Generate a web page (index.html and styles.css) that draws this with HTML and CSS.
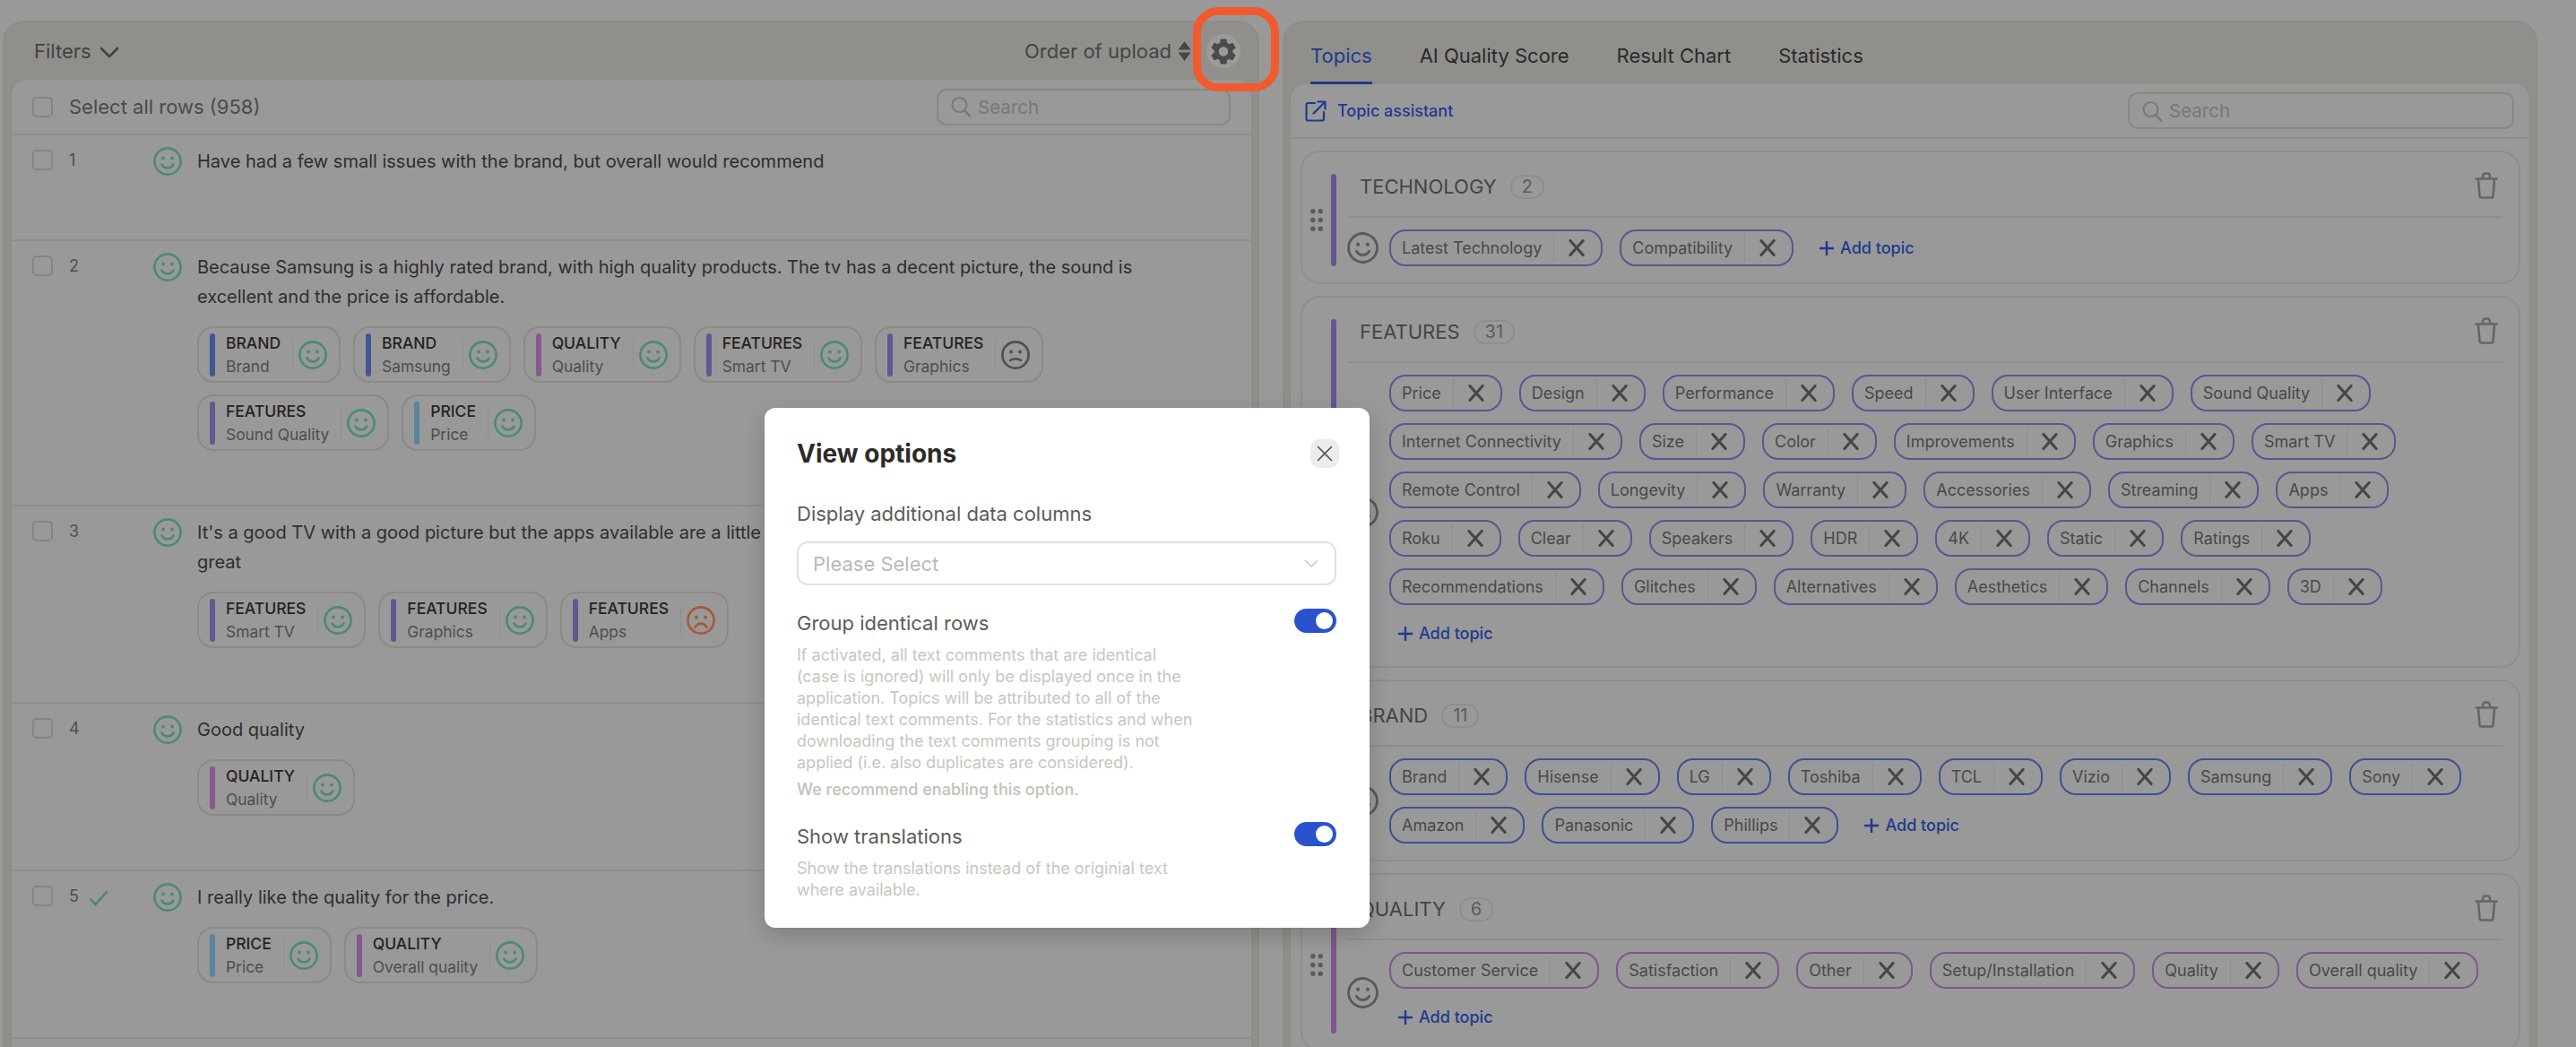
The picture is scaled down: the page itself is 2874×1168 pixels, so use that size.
FILE: index.html
```html
<!doctype html>
<html lang="en">
<head>
    <meta charset="utf-8">
    <meta name="viewport" content="width=device-width, initial-scale=1">
    <title>View options</title>
    <link rel="stylesheet" href="styles.css">
</head>
<body>

<svg class="sprite" aria-hidden="true">
    <symbol id="smile" viewBox="0 0 32 32">
        <circle cx="16" cy="16" r="14.6" fill="none" stroke="currentColor" stroke-width="2.6"/>
        <circle cx="11" cy="12.5" r="1.9" fill="currentColor"/>
        <circle cx="21" cy="12.5" r="1.9" fill="currentColor"/>
        <path d="M9.5 19.5c1.5 2.6 3.8 3.9 6.5 3.9s5-1.300 6.500-3.900" fill="none" stroke="currentColor" stroke-width="2.6" stroke-linecap="round"/>
    </symbol>
    <symbol id="neutral" viewBox="0 0 32 32">
        <circle cx="16" cy="16" r="14.6" fill="none" stroke="currentColor" stroke-width="2.6"/>
        <circle cx="11" cy="12.500" r="1.9" fill="currentColor"/>
        <circle cx="21" cy="12.500" r="1.9" fill="currentColor"/>
        <path d="M10 22c1.800-1.300 3.800-1.800 6-1.800s4.200.5 6 1.800" fill="none" stroke="currentColor" stroke-width="2.6" stroke-linecap="round"/>
    </symbol>
    <symbol id="sad" viewBox="0 0 32 32">
        <circle cx="16" cy="16" r="14.6" fill="none" stroke="currentColor" stroke-width="2.6"/>
        <circle cx="11" cy="12.500" r="1.9" fill="currentColor"/>
        <circle cx="21" cy="12.500" r="1.9" fill="currentColor"/>
        <path d="M9.500 24c1.500-3 3.800-4.400 6.500-4.400s5 1.400 6.500 4.400" fill="none" stroke="currentColor" stroke-width="2.6" stroke-linecap="round"/>
    </symbol>
    <symbol id="cross" viewBox="0 0 20 20">
        <path d="M2.500 1.500l15 17M17.500 1.500l-15 17" fill="none" stroke="currentColor" stroke-width="3.200" stroke-linecap="round"/>
    </symbol>
    <symbol id="search" viewBox="0 0 24 24">
        <circle cx="10.500" cy="10" r="8" fill="none" stroke="currentColor" stroke-width="2.200"/>
        <path d="M16 16l6 6.500" fill="none" stroke="currentColor" stroke-width="2.600" stroke-linecap="round"/>
    </symbol>
    <symbol id="trash" viewBox="0 0 26 30">
        <path d="M1.500 7.500h23M4 8l1.500 18.500q.2 2 2.200 2h10.600q2 0 2.200-2L22 8M8.500 7l1-4q.4-1.500 1.900-1.500h3.200q1.500 0 1.900 1.500l1 4" fill="none" stroke="currentColor" stroke-width="2.600" stroke-linecap="round" stroke-linejoin="round"/>
    </symbol>
    <symbol id="plus" viewBox="0 0 16 16">
        <path d="M8 0v16M0 8h16" fill="none" stroke="currentColor" stroke-width="2.400"/>
    </symbol>
    <symbol id="grip" viewBox="0 0 14 25">
        <circle cx="2.800" cy="2.800" r="2.700" fill="currentColor"/><circle cx="11.200" cy="2.800" r="2.700" fill="currentColor"/>
        <circle cx="2.800" cy="12.500" r="2.700" fill="currentColor"/><circle cx="11.200" cy="12.500" r="2.700" fill="currentColor"/>
        <circle cx="2.800" cy="22.200" r="2.700" fill="currentColor"/><circle cx="11.200" cy="22.200" r="2.700" fill="currentColor"/>
    </symbol>
</svg>

<div class="page">

    <!-- comments -->
    <section class="panel panel-left">
        <div class="panel-head">
            <span class="filters">Filters
                <svg class="chevron" viewBox="0 0 22 13"><path d="M2 2l9 9 9-9" fill="none" stroke="currentColor" stroke-width="2.600" stroke-linecap="round" stroke-linejoin="round"/></svg>
            </span>
            <span class="order">Order of upload
                <svg class="sort" viewBox="0 0 15 22"><path d="M7.500 0l7 9.500H.5zM7.500 22l-7-9.500h14z" fill="currentColor"/></svg>
            </span>
            <span class="gear-btn">
                <svg class="gear" viewBox="2.500 2 19 20"><path d="M19.140 12.940c.04-.3.06-.61.06-.94 0-.32-.02-.64-.07-.94l2.030-1.580a.49.49 0 0 0 .12-.61l-1.920-3.320a.488.488 0 0 0-.59-.22l-2.390.96c-.5-.38-1.030-.7-1.620-.94l-.36-2.540a.484.484 0 0 0-.48-.41h-3.840c-.24 0-.43.17-.47.41l-.36 2.540c-.59.24-1.130.57-1.620.94l-2.390-.96c-.22-.08-.47 0-.59.22L2.740 8.870c-.12.21-.08.47.12.61l2.030 1.580c-.05.3-.09.63-.09.94s.02.64.07.94l-2.030 1.580a.49.49 0 0 0-.12.61l1.920 3.320c.12.22.37.29.59.22l2.390-.96c.5.38 1.030.7 1.620.94l.36 2.540c.05.24.24.41.48.41h3.840c.24 0 .44-.17.47-.41l.36-2.540c.59-.24 1.130-.56 1.620-.94l2.390.96c.22.08.47 0 .59-.22l1.920-3.320c.12-.22.07-.47-.12-.61l-2.010-1.580zM12 15.600c-1.980 0-3.600-1.620-3.600-3.600s1.620-3.600 3.600-3.600 3.600 1.620 3.600 3.600-1.620 3.600-3.600 3.600z" fill="currentColor"/></svg>
            </span>
        </div>
        <div class="panel-body">
            <div class="select-row">
                <span class="checkbox"></span>
                <span class="select-label">Select all rows (958)</span>
                <span class="search search-left">
                    <svg class="search-icon"><use href="#search"/></svg>Search
                </span>
            </div>

            <div class="row row-empty">
                <span class="checkbox"></span>
                <span class="num">1</span>
                <svg class="face face-good"><use href="#smile"/></svg>
                <div class="row-main">
                    <p class="comment">Have had a few small issues with the brand, but overall would recommend</p>
                </div>
            </div>

            <div class="row">
                <span class="checkbox"></span>
                <span class="num">2</span>
                <svg class="face face-good"><use href="#smile"/></svg>
                <div class="row-main">
                    <p class="comment">Because Samsung is a highly rated brand, with high quality products. The tv has a decent picture, the sound is excellent and the price is affordable.</p>
                    <div class="tags">
                        <div class="tag brand"><div class="tag-text"><b>BRAND</b><span>Brand</span></div><svg class="face face-good"><use href="#smile"/></svg></div>
                        <div class="tag brand"><div class="tag-text"><b>BRAND</b><span>Samsung</span></div><svg class="face face-good"><use href="#smile"/></svg></div>
                        <div class="tag quality"><div class="tag-text"><b>QUALITY</b><span>Quality</span></div><svg class="face face-good"><use href="#smile"/></svg></div>
                        <div class="tag features"><div class="tag-text"><b>FEATURES</b><span>Smart TV</span></div><svg class="face face-good"><use href="#smile"/></svg></div>
                        <div class="tag features"><div class="tag-text"><b>FEATURES</b><span>Graphics</span></div><svg class="face face-neutral"><use href="#neutral"/></svg></div>
                        <div class="tag features"><div class="tag-text"><b>FEATURES</b><span>Sound Quality</span></div><svg class="face face-good"><use href="#smile"/></svg></div>
                        <div class="tag price"><div class="tag-text"><b>PRICE</b><span>Price</span></div><svg class="face face-good"><use href="#smile"/></svg></div>
                    </div>
                </div>
            </div>

            <div class="row">
                <span class="checkbox"></span>
                <span class="num">3</span>
                <svg class="face face-good"><use href="#smile"/></svg>
                <div class="row-main">
                    <p class="comment">It's a good TV with a good picture but the apps available are a little<br>great</p>
                    <div class="tags">
                        <div class="tag features"><div class="tag-text"><b>FEATURES</b><span>Smart TV</span></div><svg class="face face-good"><use href="#smile"/></svg></div>
                        <div class="tag features"><div class="tag-text"><b>FEATURES</b><span>Graphics</span></div><svg class="face face-good"><use href="#smile"/></svg></div>
                        <div class="tag features"><div class="tag-text"><b>FEATURES</b><span>Apps</span></div><svg class="face face-bad"><use href="#sad"/></svg></div>
                    </div>
                </div>
            </div>

            <div class="row">
                <span class="checkbox"></span>
                <span class="num">4</span>
                <svg class="face face-good"><use href="#smile"/></svg>
                <div class="row-main">
                    <p class="comment">Good quality</p>
                    <div class="tags">
                        <div class="tag quality"><div class="tag-text"><b>QUALITY</b><span>Quality</span></div><svg class="face face-good"><use href="#smile"/></svg></div>
                    </div>
                </div>
            </div>

            <div class="row">
                <span class="checkbox"></span>
                <span class="num">5 <svg class="tick" viewBox="0 0 22 18"><path d="M1.500 9.500l6 6.500L20.500 1.500" fill="none" stroke="currentColor" stroke-width="2.400"/></svg></span>
                <svg class="face face-good"><use href="#smile"/></svg>
                <div class="row-main">
                    <p class="comment">I really like the quality for the price.</p>
                    <div class="tags">
                        <div class="tag price"><div class="tag-text"><b>PRICE</b><span>Price</span></div><svg class="face face-good"><use href="#smile"/></svg></div>
                        <div class="tag quality"><div class="tag-text"><b>QUALITY</b><span>Overall quality</span></div><svg class="face face-good"><use href="#smile"/></svg></div>
                    </div>
                </div>
            </div>
        </div>
    </section>

    <!-- topics -->
    <section class="panel panel-right">
        <div class="tabs">
            <span class="tab tab-active">Topics</span>
            <span class="tab">AI Quality Score</span>
            <span class="tab">Result Chart</span>
            <span class="tab">Statistics</span>
        </div>
        <div class="panel-body">
            <div class="assistant-row">
                <span class="assistant">
                    <svg class="assistant-icon" viewBox="0 0 24 24"><path d="M11 3H3.500Q1.500 3 1.500 5v15.500q0 2 2 2H19q2 0 2-2V13M9.500 14.500L22 2M14.500 1.500h8v8" fill="none" stroke="currentColor" stroke-width="2.200" stroke-linecap="round" stroke-linejoin="round"/></svg>
                    Topic assistant
                </span>
                <span class="search search-right">
                    <svg class="search-icon"><use href="#search"/></svg>Search
                </span>
            </div>

            <div class="cards">
                <div class="card">
                    <svg class="grip"><use href="#grip"/></svg>
                    <span class="bar bar-features"></span>
                    <div class="card-body">
                        <div class="card-head">
                            <span class="card-title">TECHNOLOGY</span>
                            <span class="count">2</span>
                            <svg class="trash"><use href="#trash"/></svg>
                        </div>
                        <div class="card-row">
                            <svg class="face face-card"><use href="#smile"/></svg>
                            <div class="chips chips-features">
                                <span class="chip"><span class="chip-name">Latest Technology</span><span class="chip-x"><svg><use href="#cross"/></svg></span></span>
                                <span class="chip"><span class="chip-name">Compatibility</span><span class="chip-x"><svg><use href="#cross"/></svg></span></span>
                                <span class="add-topic"><svg><use href="#plus"/></svg>Add topic</span>
                            </div>
                        </div>
                    </div>
                </div>

                <div class="card">
                    <svg class="grip"><use href="#grip"/></svg>
                    <span class="bar bar-features"></span>
                    <div class="card-body">
                        <div class="card-head">
                            <span class="card-title">FEATURES</span>
                            <span class="count">31</span>
                            <svg class="trash"><use href="#trash"/></svg>
                        </div>
                        <div class="card-row">
                            <svg class="face face-card"><use href="#smile"/></svg>
                            <div class="chips chips-features">
                                <span class="chip"><span class="chip-name">Price</span><span class="chip-x"><svg><use href="#cross"/></svg></span></span>
                                <span class="chip"><span class="chip-name">Design</span><span class="chip-x"><svg><use href="#cross"/></svg></span></span>
                                <span class="chip"><span class="chip-name">Performance</span><span class="chip-x"><svg><use href="#cross"/></svg></span></span>
                                <span class="chip"><span class="chip-name">Speed</span><span class="chip-x"><svg><use href="#cross"/></svg></span></span>
                                <span class="chip"><span class="chip-name">User Interface</span><span class="chip-x"><svg><use href="#cross"/></svg></span></span>
                                <span class="chip"><span class="chip-name">Sound Quality</span><span class="chip-x"><svg><use href="#cross"/></svg></span></span>
                                <span class="chip"><span class="chip-name">Internet Connectivity</span><span class="chip-x"><svg><use href="#cross"/></svg></span></span>
                                <span class="chip"><span class="chip-name">Size</span><span class="chip-x"><svg><use href="#cross"/></svg></span></span>
                                <span class="chip"><span class="chip-name">Color</span><span class="chip-x"><svg><use href="#cross"/></svg></span></span>
                                <span class="chip"><span class="chip-name">Improvements</span><span class="chip-x"><svg><use href="#cross"/></svg></span></span>
                                <span class="chip"><span class="chip-name">Graphics</span><span class="chip-x"><svg><use href="#cross"/></svg></span></span>
                                <span class="chip"><span class="chip-name">Smart TV</span><span class="chip-x"><svg><use href="#cross"/></svg></span></span>
                                <span class="chip"><span class="chip-name">Remote Control</span><span class="chip-x"><svg><use href="#cross"/></svg></span></span>
                                <span class="chip"><span class="chip-name">Longevity</span><span class="chip-x"><svg><use href="#cross"/></svg></span></span>
                                <span class="chip"><span class="chip-name">Warranty</span><span class="chip-x"><svg><use href="#cross"/></svg></span></span>
                                <span class="chip"><span class="chip-name">Accessories</span><span class="chip-x"><svg><use href="#cross"/></svg></span></span>
                                <span class="chip"><span class="chip-name">Streaming</span><span class="chip-x"><svg><use href="#cross"/></svg></span></span>
                                <span class="chip"><span class="chip-name">Apps</span><span class="chip-x"><svg><use href="#cross"/></svg></span></span>
                                <span class="chip"><span class="chip-name">Roku</span><span class="chip-x"><svg><use href="#cross"/></svg></span></span>
                                <span class="chip"><span class="chip-name">Clear</span><span class="chip-x"><svg><use href="#cross"/></svg></span></span>
                                <span class="chip"><span class="chip-name">Speakers</span><span class="chip-x"><svg><use href="#cross"/></svg></span></span>
                                <span class="chip"><span class="chip-name">HDR</span><span class="chip-x"><svg><use href="#cross"/></svg></span></span>
                                <span class="chip"><span class="chip-name">4K</span><span class="chip-x"><svg><use href="#cross"/></svg></span></span>
                                <span class="chip"><span class="chip-name">Static</span><span class="chip-x"><svg><use href="#cross"/></svg></span></span>
                                <span class="chip"><span class="chip-name">Ratings</span><span class="chip-x"><svg><use href="#cross"/></svg></span></span>
                                <span class="chip"><span class="chip-name">Recommendations</span><span class="chip-x"><svg><use href="#cross"/></svg></span></span>
                                <span class="chip"><span class="chip-name">Glitches</span><span class="chip-x"><svg><use href="#cross"/></svg></span></span>
                                <span class="chip"><span class="chip-name">Alternatives</span><span class="chip-x"><svg><use href="#cross"/></svg></span></span>
                                <span class="chip"><span class="chip-name">Aesthetics</span><span class="chip-x"><svg><use href="#cross"/></svg></span></span>
                                <span class="chip"><span class="chip-name">Channels</span><span class="chip-x"><svg><use href="#cross"/></svg></span></span>
                                <span class="chip"><span class="chip-name">3D</span><span class="chip-x"><svg><use href="#cross"/></svg></span></span>
                                <span class="add-topic add-topic-line"><svg><use href="#plus"/></svg>Add topic</span>
                            </div>
                        </div>
                    </div>
                </div>

                <div class="card">
                    <svg class="grip"><use href="#grip"/></svg>
                    <span class="bar bar-brand"></span>
                    <div class="card-body">
                        <div class="card-head">
                            <span class="card-title">BRAND</span>
                            <span class="count">11</span>
                            <svg class="trash"><use href="#trash"/></svg>
                        </div>
                        <div class="card-row">
                            <svg class="face face-card"><use href="#smile"/></svg>
                            <div class="chips chips-brand">
                                <span class="chip"><span class="chip-name">Brand</span><span class="chip-x"><svg><use href="#cross"/></svg></span></span>
                                <span class="chip"><span class="chip-name">Hisense</span><span class="chip-x"><svg><use href="#cross"/></svg></span></span>
                                <span class="chip"><span class="chip-name">LG</span><span class="chip-x"><svg><use href="#cross"/></svg></span></span>
                                <span class="chip"><span class="chip-name">Toshiba</span><span class="chip-x"><svg><use href="#cross"/></svg></span></span>
                                <span class="chip"><span class="chip-name">TCL</span><span class="chip-x"><svg><use href="#cross"/></svg></span></span>
                                <span class="chip"><span class="chip-name">Vizio</span><span class="chip-x"><svg><use href="#cross"/></svg></span></span>
                                <span class="chip"><span class="chip-name">Samsung</span><span class="chip-x"><svg><use href="#cross"/></svg></span></span>
                                <span class="chip"><span class="chip-name">Sony</span><span class="chip-x"><svg><use href="#cross"/></svg></span></span>
                                <span class="chip"><span class="chip-name">Amazon</span><span class="chip-x"><svg><use href="#cross"/></svg></span></span>
                                <span class="chip"><span class="chip-name">Panasonic</span><span class="chip-x"><svg><use href="#cross"/></svg></span></span>
                                <span class="chip"><span class="chip-name">Phillips</span><span class="chip-x"><svg><use href="#cross"/></svg></span></span>
                                <span class="add-topic"><svg><use href="#plus"/></svg>Add topic</span>
                            </div>
                        </div>
                    </div>
                </div>

                <div class="card">
                    <svg class="grip"><use href="#grip"/></svg>
                    <span class="bar bar-quality"></span>
                    <div class="card-body">
                        <div class="card-head">
                            <span class="card-title">QUALITY</span>
                            <span class="count">6</span>
                            <svg class="trash"><use href="#trash"/></svg>
                        </div>
                        <div class="card-row">
                            <svg class="face face-card"><use href="#smile"/></svg>
                            <div class="chips chips-quality">
                                <span class="chip"><span class="chip-name">Customer Service</span><span class="chip-x"><svg><use href="#cross"/></svg></span></span>
                                <span class="chip"><span class="chip-name">Satisfaction</span><span class="chip-x"><svg><use href="#cross"/></svg></span></span>
                                <span class="chip"><span class="chip-name">Other</span><span class="chip-x"><svg><use href="#cross"/></svg></span></span>
                                <span class="chip"><span class="chip-name">Setup/Installation</span><span class="chip-x"><svg><use href="#cross"/></svg></span></span>
                                <span class="chip"><span class="chip-name">Quality</span><span class="chip-x"><svg><use href="#cross"/></svg></span></span>
                                <span class="chip"><span class="chip-name">Overall quality</span><span class="chip-x"><svg><use href="#cross"/></svg></span></span>
                                <span class="add-topic add-topic-line"><svg><use href="#plus"/></svg>Add topic</span>
                            </div>
                        </div>
                    </div>
                </div>
            </div>
        </div>
    </section>
</div>

<!-- marks the settings button -->
<div class="callout"></div>

<div class="modal">
    <div class="modal-head">
        <h2 class="modal-title">View options</h2>
        <span class="modal-close">
            <svg viewBox="0 0 18 18"><path d="M1 1l16 16M17 1L1 17" fill="none" stroke="currentColor" stroke-width="1.700"/></svg>
        </span>
    </div>

    <div class="option-label">Display additional data columns</div>
    <div class="select">
        <span>Please Select</span>
        <svg viewBox="0 0 16 10"><path d="M1 1l7 7 7-7" fill="none" stroke="currentColor" stroke-width="1.500"/></svg>
    </div>

    <div class="option option-group">
        <span class="option-label">Group identical rows</span>
        <span class="toggle"></span>
    </div>
    <p class="option-desc">If activated, all text comments that are identical (case is ignored) will only be displayed once in the application. Topics will be attributed to all of the identical text comments. For the statistics and when downloading the text comments grouping is not applied (i.e. also duplicates are considered).</p>
    <p class="option-hint">We recommend enabling this option.</p>

    <div class="option option-translate">
        <span class="option-label">Show translations</span>
        <span class="toggle"></span>
    </div>
    <p class="option-desc">Show the translations instead of the originial text where available.</p>
</div>

</body>
</html>
```

FILE: styles.css
```css
* {
    box-sizing: border-box;
}

body {
    margin: 0;
    height: 100vh;
    overflow: hidden;
    background: #999;
    font-family: Inter, "Noto Sans", sans-serif;
    font-size: 22px;
    color: #2e2e2e;
}

p {
    margin: 0;
}

svg {
    display: block;
    flex: none;
}

.sprite {
    display: none;
}

.page {
    display: flex;
    gap: 26px;
    height: 100vh;
    padding: 23px 0 0 3px;
}

.panel {
    display: flex;
    flex-direction: column;
    overflow: hidden;
    border: 2px solid #8d8c86;
    border-bottom: 0;
    border-radius: 24px 24px 0 0;
    background: #908f8b;
}

.panel-left {
    width: 1402px;
}

.panel-right {
    width: 1400px;
}

.panel-body {
    flex: 1;
    margin: 0 5px;
    border: solid #8e8d87;
    border-width: 0 2px;
    border-radius: 18px 18px 0 0;
    background: #999;
}

.panel-left .panel-body {
    margin-left: 6px;
}

/* left side */

.panel-head {
    flex: none;
    display: flex;
    align-items: center;
    height: 64px;
    padding: 0 19px 0 33px;
    color: #424242;
}

.filters {
    display: flex;
    align-items: center;
    gap: 9px;
    margin-right: auto;
}

.chevron {
    width: 22px;
    height: 13px;
    margin-top: 3px;
}

.order {
    display: flex;
    align-items: center;
    gap: 7px;
    color: #454545;
}

.sort {
    width: 15px;
    height: 22px;
}

.gear-btn {
    display: flex;
    align-items: center;
    justify-content: center;
    width: 38px;
    height: 38px;
    margin-left: 17px;
    border-radius: 50%;
    background: #9b9b99;
    color: #4d4b4a;
}

.gear {
    width: 28px;
    height: 29px;
}

.select-row {
    display: flex;
    align-items: center;
    height: 62px;
    padding: 0 23px;
    border-bottom: 2px solid #8f8e88;
    color: #4b4b4b;
}

.checkbox {
    flex: none;
    width: 23px;
    height: 23px;
    border: 2px solid #858583;
    border-radius: 5px;
}

.select-label {
    margin: 0 auto 0 18px;
}

.search {
    display: flex;
    align-items: center;
    gap: 7px;
    height: 41px;
    padding-left: 13px;
    border: 2px solid #8b8782;
    border-radius: 11px;
    font-size: 20.5px;
    color: #777;
}

.search-left {
    width: 328px;
}

.search-right {
    width: 431px;
}

.search-icon {
    width: 24px;
    height: 24px;
    color: #7a7976;
}

.row {
    display: flex;
    padding: 13px 23px 60px;
    border-bottom: 2px solid #8f8e88;
}

.row-empty {
    padding-bottom: 70px;
}

.row .checkbox {
    margin-top: 3px;
}

.num {
    display: flex;
    gap: 11px;
    width: 94px;
    margin-left: 18px;
    padding-top: 3px;
    font-size: 18px;
    line-height: 24px;
    color: #4f4f4f;
}

.tick {
    width: 22px;
    height: 18px;
    margin-top: 5px;
    color: #458672;
}

.face {
    width: 32px;
    height: 32px;
}

.face-good {
    color: #4c8a76;
}

.face-neutral {
    color: #4f4f4f;
}

.face-bad {
    color: #a85838;
}

.row-main {
    width: 1060px;
    margin-left: 17px;
}

.comment {
    font-size: 20px;
    line-height: 33px;
}

.tags {
    display: flex;
    flex-wrap: wrap;
    gap: 13px 14px;
    margin-top: 16px;
}

.tag {
    display: flex;
    align-items: center;
    height: 63px;
    padding: 0 13px 0 12px;
    border: 2px solid #8e8984;
    border-radius: 18px;
}

.tag::before {
    content: "";
    width: 6px;
    height: 48px;
    margin-right: 12px;
    border-radius: 3px;
    background: var(--tag-color);
}

.brand {
    --tag-color: #445691;
}

.features {
    --tag-color: #625890;
}

.quality {
    --tag-color: #85598e;
}

.price {
    --tag-color: #5a84a0;
}

.tag-text {
    display: flex;
    flex-direction: column;
    gap: 2px;
    height: 32px;
    padding-right: 13px;
    margin-right: 6px;
    justify-content: center;
    border-right: 1px solid #8f8e88;
    line-height: 24px;
}

.tag-text b {
    font-size: 17.5px;
    font-weight: 500;
    color: #262220;
}

.tag-text span {
    font-size: 17.4px;
    color: #504d4b;
}

/* right side */

.tabs {
    flex: none;
    display: flex;
    gap: 53px;
    height: 69px;
    padding-left: 29px;
}

.tab {
    display: flex;
    align-items: center;
    padding-top: 8px;
    border-bottom: 3px solid transparent;
    color: #2a2a2a;
}

.tab-active {
    border-color: #1f3a8f;
    color: #1f3a8f;
}

.assistant-row {
    display: flex;
    align-items: center;
    justify-content: space-between;
    height: 61px;
    padding: 0 17px 0 16px;
    border-bottom: 2px solid #8f8e88;
}

.assistant {
    display: flex;
    align-items: center;
    gap: 12px;
    font-size: 18px;
    font-weight: 500;
    color: #1f3a8f;
}

.assistant-icon {
    width: 24px;
    height: 24px;
}

.cards {
    display: flex;
    flex-direction: column;
    gap: 13px;
    padding: 13px 10px 0 11px;
}

.card {
    display: flex;
    padding: 24px 18px 18px 9px;
    border: 2px solid #8f8f88;
    border-radius: 22px;
}

.grip {
    align-self: center;
    width: 14px;
    height: 25px;
    color: #5b5b5b;
}

.bar {
    flex: none;
    width: 6px;
    margin: 0 12px 0 9px;
    border-radius: 3px;
}

.bar-features {
    background: #655592;
}

.bar-brand {
    background: #445690;
}

.bar-quality {
    background: #80568a;
}

.card-body {
    flex: 1;
}

.card-head {
    display: flex;
    align-items: flex-start;
    gap: 15px;
    height: 49px;
    padding-left: 14px;
    border-bottom: 2px solid #8f8f88;
}

.card-title {
    font-size: 22px;
    line-height: 28px;
    color: #454545;
}

.count {
    margin-top: 1px;
    padding: 0 11px;
    border: 2px solid #8f8e88;
    border-radius: 13px;
    font-size: 20px;
    line-height: 23px;
    color: #5c5c5c;
}

.trash {
    width: 26px;
    height: 30px;
    margin: -2px 5px 0 auto;
    color: #666;
}

.card-row {
    display: flex;
    align-items: center;
    gap: 12px;
    margin-top: 13px;
}

.face-card {
    width: 35px;
    height: 35px;
    color: #5a5a5a;
}

.chips {
    flex: 1;
    display: flex;
    flex-wrap: wrap;
    align-items: center;
    gap: 13px 19px;
}

.chip {
    display: flex;
    align-items: center;
    height: 41px;
    padding-left: 12px;
    border: 2px solid var(--chip-color);
    border-radius: 18px;
}

.chips-features {
    --chip-color: #5f5392;
}

.chips-brand {
    --chip-color: #3f5190;
}

.chips-quality {
    --chip-color: #7d5690;
}

.chip-name {
    padding-right: 13px;
    font-size: 18px;
    color: #4a4846;
}

.chip-x {
    display: flex;
    align-items: center;
    width: 53px;
    height: 31px;
    padding-left: 15px;
    border-left: 1px solid #8f8e88;
    color: #484644;
}

.chip-x svg {
    width: 20px;
    height: 19px;
}

.add-topic {
    display: flex;
    align-items: center;
    gap: 7px;
    height: 37px;
    padding-left: 10px;
    font-size: 18px;
    font-weight: 500;
    color: #1f3a8f;
}

.add-topic svg {
    width: 16px;
    height: 16px;
}

.add-topic-line {
    width: 100%;
}

/* overlays */

.callout {
    position: absolute;
    left: 1331px;
    top: 8px;
    width: 96px;
    height: 94px;
    border: 9px solid #f15a2f;
    border-radius: 28px;
}

.modal {
    position: absolute;
    left: 853px;
    top: 455px;
    width: 675px;
    height: 580px;
    padding: 34px 37px 0 36px;
    border-radius: 12px;
    background: #fff;
    box-shadow: 0 8px 24px rgba(0, 0, 0, .18);
}

.modal-head {
    display: flex;
    align-items: center;
    justify-content: space-between;
    margin-bottom: 34px;
}

.modal-title {
    margin: 0;
    font-size: 28px;
    font-weight: 700;
    color: #2d2a26;
}

.modal-close {
    display: flex;
    align-items: center;
    justify-content: center;
    width: 32px;
    height: 32px;
    margin-right: -3px;
    border-radius: 10px;
    background: #ececec;
    color: #555;
}

.modal-close svg {
    width: 18px;
    height: 18px;
}

.option-label {
    font-size: 22px;
    line-height: 32px;
    color: #5f5a57;
}

.select {
    display: flex;
    align-items: center;
    justify-content: space-between;
    height: 49px;
    margin-top: 15px;
    padding: 0 18px 0 16px;
    border: 2px solid #e1e0e6;
    border-radius: 12px;
    color: #bdb8b5;
}

.select svg {
    width: 16px;
    height: 10px;
    color: #c4c4cc;
}

.option {
    display: flex;
    align-items: flex-start;
    justify-content: space-between;
}

.option-group {
    margin-top: 26px;
}

.option-translate {
    margin-top: 24px;
}

.toggle {
    position: relative;
    width: 47px;
    height: 27px;
    border-radius: 14px;
    background: #2a52cf;
}

.toggle::after {
    content: "";
    position: absolute;
    right: 4px;
    top: 4px;
    width: 19px;
    height: 19px;
    border-radius: 50%;
    background: #fff;
}

.option-desc {
    max-width: 445px;
    margin-top: 8px;
    font-size: 18px;
    line-height: 24px;
    color: #c9c5c0;
}

.option-hint {
    margin-top: 6px;
    font-size: 18px;
    font-weight: 500;
    line-height: 24px;
    color: #c4c0ba;
}
```
